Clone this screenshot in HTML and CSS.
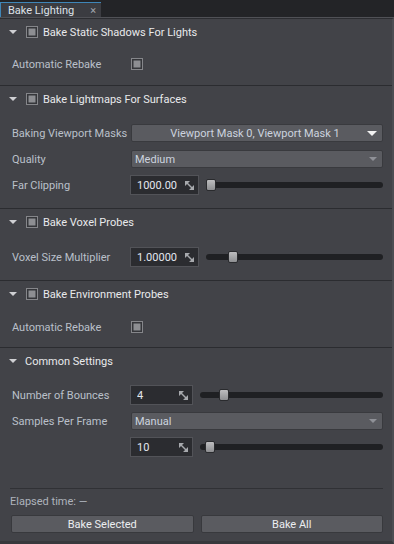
FILE: index.html
```html
<!doctype html>
<html lang="en">
<head>
	<meta charset="utf-8" />
	<title>Bake Lighting</title>
	<link rel="stylesheet" href="styles.css">
</head>
<body>

	<div class="window">

		<!-- BEGIN: Tab bar. -->
		<div class="tabbar">
			<div class="tab">
				<span class="tab__title">Bake Lighting</span>
				<span class="tab__close">&times;</span>
			</div>
		</div>
		<!-- END: Tab bar. -->

		<div class="panel">

			<!-- Static shadows. -->
			<section class="section">
				<div class="section__header">
					<span class="caret"></span>
					<span class="check"></span>
					<span class="section__title">Bake Static Shadows For Lights</span>
				</div>
				<div class="section__body section__body--a">
					<div class="row">
						<span class="row__label">Automatic Rebake</span>
						<span class="check check--field"></span>
					</div>
				</div>
			</section>

			<!-- Lightmaps. -->
			<section class="section">
				<div class="section__header">
					<span class="caret"></span>
					<span class="check"></span>
					<span class="section__title">Bake Lightmaps For Surfaces</span>
				</div>
				<div class="section__body section__body--b">
					<div class="row">
						<span class="row__label">Baking Viewport Masks</span>
						<div class="combo combo--center">
							<span class="combo__text">Viewport Mask 0, Viewport Mask 1</span>
							<span class="combo__arrow combo__arrow--bright"></span>
						</div>
					</div>
					<div class="row">
						<span class="row__label">Quality</span>
						<div class="combo">
							<span class="combo__text">Medium</span>
							<span class="combo__arrow"></span>
						</div>
					</div>
					<div class="row">
						<span class="row__label">Far Clipping</span>
						<div class="spin">
							<span class="spin__value">1000.000000</span>
							<svg class="spin__icon" viewBox="0 0 9 9"><path d="M0 0H5L0 5Z M9 9H4L9 4Z" fill="#a7a9ad"/><path d="M1.5 1.5L7.5 7.5" stroke="#a7a9ad" stroke-width="1.4"/></svg>
						</div>
						<div class="slider">
							<span class="slider__handle" style="left: 0px"></span>
						</div>
					</div>
				</div>
			</section>

			<!-- Voxel probes. -->
			<section class="section">
				<div class="section__header">
					<span class="caret"></span>
					<span class="check"></span>
					<span class="section__title">Bake Voxel Probes</span>
				</div>
				<div class="section__body section__body--c">
					<div class="row">
						<span class="row__label">Voxel Size Multiplier</span>
						<div class="spin">
							<span class="spin__value">1.00000</span>
							<svg class="spin__icon" viewBox="0 0 9 9"><path d="M0 0H5L0 5Z M9 9H4L9 4Z" fill="#a7a9ad"/><path d="M1.5 1.5L7.5 7.5" stroke="#a7a9ad" stroke-width="1.4"/></svg>
						</div>
						<div class="slider">
							<span class="slider__handle" style="left: 22px"></span>
						</div>
					</div>
				</div>
			</section>

			<!-- Environment probes. -->
			<section class="section">
				<div class="section__header">
					<span class="caret"></span>
					<span class="check"></span>
					<span class="section__title">Bake Environment Probes</span>
				</div>
				<div class="section__body section__body--d">
					<div class="row">
						<span class="row__label">Automatic Rebake</span>
						<span class="check check--field"></span>
					</div>
				</div>
			</section>

			<!-- Common settings. -->
			<section class="section section--last">
				<div class="section__header">
					<span class="caret caret--plain"></span>
					<span class="section__title">Common Settings</span>
				</div>
				<div class="section__body section__body--b">
					<div class="row">
						<span class="row__label">Number of Bounces</span>
						<div class="spin spin--short">
							<span class="spin__value">4</span>
							<svg class="spin__icon" viewBox="0 0 9 9"><path d="M0 0H5L0 5Z M9 9H4L9 4Z" fill="#a7a9ad"/><path d="M1.5 1.5L7.5 7.5" stroke="#a7a9ad" stroke-width="1.4"/></svg>
						</div>
						<div class="slider">
							<span class="slider__handle" style="left: 19px"></span>
						</div>
					</div>
					<div class="row">
						<span class="row__label">Samples Per Frame</span>
						<div class="combo">
							<span class="combo__text">Manual</span>
							<span class="combo__arrow"></span>
						</div>
					</div>
					<div class="row">
						<span class="row__label"></span>
						<div class="spin spin--short">
							<span class="spin__value">10</span>
							<svg class="spin__icon" viewBox="0 0 9 9"><path d="M0 0H5L0 5Z M9 9H4L9 4Z" fill="#a7a9ad"/><path d="M1.5 1.5L7.5 7.5" stroke="#a7a9ad" stroke-width="1.4"/></svg>
						</div>
						<div class="slider">
							<span class="slider__handle" style="left: 5px"></span>
						</div>
					</div>
				</div>
			</section>

			<!-- BEGIN: Footer. -->
			<div class="footer">
				<div class="footer__status">Elapsed time: &mdash;</div>
				<div class="footer__buttons">
					<button class="button">Bake Selected</button>
					<button class="button">Bake All</button>
				</div>
			</div>
			<!-- END: Footer. -->

		</div>
	</div>

</body>
</html>
```

FILE: styles.css
```css
html {
	box-sizing: border-box ;
}

*, *:before, *:after {
	box-sizing: inherit ;
}

body {
	background-color: #232427 ;
	color: #bac0ca ;
	font-family: Roboto, "Liberation Sans", sans-serif ;
	font-size: 11px ;
	margin: 0px 0px 0px 0px ;
}

.window {
	display: flex ;
	flex-direction: column ;
	height: 544px ;
	width: 394px ;
}

/* BEGIN: Tab bar. */
.tabbar {
	align-items: flex-end ;
	background-color: #232427 ;
	border-bottom: 1px solid #505156 ;
	display: flex ;
	flex: 0 0 auto ;
	height: 18px ;
}

.tab {
	align-items: center ;
	background-color: #3b3c41 ;
	border-left: 1px solid #3f86b8 ;
	border-top: 1px solid #3f86b8 ;
	display: flex ;
	height: 15px ;
	padding: 0px 0px 0px 7px ;
	width: 101px ;
}

.tab__title {
	color: #dde1e8 ;
	flex: 1 1 auto ;
}

.tab__close {
	color: #a2a6ad ;
	font-size: 11px ;
	margin: 0px 5px 0px 0px ;
}
/* END: Tab bar. */

.panel {
	background-color: #424348 ;
	border-bottom: 3px solid #37383c ;
	border-right: 2px solid #4c4d52 ;
	border-top: 1px solid #2c2d31 ;
	display: flex ;
	flex: 1 1 auto ;
	flex-direction: column ;
}

/* BEGIN: Sections. */
.section {
	border-bottom: 1px solid #2b2c30 ;
	flex: 0 0 auto ;
}

.section--last {
	border-bottom: none ;
	flex: 1 1 auto ;
}

.section__header {
	align-items: center ;
	color: #e9eaec ;
	display: flex ;
	height: 26px ;
	padding: 0px 0px 0px 9px ;
}

.section__body {
	display: flex ;
	flex-direction: column ;
	gap: 6px ;
	padding: 11px 9px 13px 12px ;
}

.section__body--a {
	padding: 9px 9px 11px 12px ;
}

.section__body--c {
	padding: 12px 9px 13px 12px ;
}

.section__body--d {
	padding: 10px 9px 10px 12px ;
}

.caret {
	border-left: 4px solid transparent ;
	border-right: 4px solid transparent ;
	border-top: 4px solid #cfd0d3 ;
	height: 0px ;
	margin: 0px 9px 0px 0px ;
	width: 0px ;
}

.caret--plain {
	margin: 0px 8px 0px 0px ;
}

.check {
	background-color: #8d8e92 ;
	border: 1px solid #85868a ;
	box-shadow: inset 0px 0px 0px 1.5px #35363a ;
	height: 12px ;
	margin: 0px 5px 0px 0px ;
	width: 12px ;
}

.check--field {
	margin: 0px 0px 0px 1px ;
}
/* END: Sections. */

/* BEGIN: Rows and fields. */
.row {
	align-items: center ;
	display: flex ;
	height: 20px ;
}

.row__label {
	flex: 0 0 auto ;
	white-space: nowrap ;
	width: 118px ;
}

.combo {
	align-items: center ;
	background-color: #5a5b60 ;
	border: 1px solid #393a3e ;
	border-radius: 2px ;
	color: #ccd3df ;
	display: flex ;
	flex: 1 1 auto ;
	height: 18px ;
	margin: 0px 0px 0px 1px ;
	padding: 0px 5px 0px 3px ;
}

.combo__text {
	flex: 1 1 auto ;
}

.combo--center .combo__text {
	padding: 0px 0px 0px 8px ;
	text-align: center ;
}

.combo__arrow {
	border-left: 4px solid transparent ;
	border-right: 4px solid transparent ;
	border-top: 4px solid #8f9197 ;
	height: 0px ;
	width: 0px ;
}

.combo__arrow--bright {
	border-left-width: 5px ;
	border-right-width: 5px ;
	border-top: 5px solid #f2f2f2 ;
}

.spin {
	align-items: center ;
	background-color: #2b2c30 ;
	border: 1px solid #525358 ;
	color: #e3e7ee ;
	display: flex ;
	flex: 0 0 auto ;
	height: 20px ;
	padding: 0px 4px 0px 6px ;
	width: 69px ;
}

.spin--short {
	width: 63px ;
}

.spin__value {
	flex: 1 1 auto ;
	overflow: hidden ;
	white-space: nowrap ;
}

.spin__icon {
	flex: 0 0 auto ;
	height: 9px ;
	margin: 0px 0px 0px 8px ;
	width: 9px ;
}

.slider {
	background-color: #1f2023 ;
	border-radius: 3px ;
	flex: 1 1 auto ;
	height: 6px ;
	margin: 0px 0px 0px 7px ;
	position: relative ;
}

.slider__handle {
	background: linear-gradient( #bdbdbf, #8e8f92 ) ;
	border: 1px solid #2a2b2e ;
	border-radius: 2px ;
	height: 12px ;
	position: absolute ;
	top: -3px ;
	width: 10px ;
}
/* END: Rows and fields. */

/* BEGIN: Footer. */
.footer {
	border-top: 1px solid #303135 ;
	flex: 0 0 auto ;
	margin: 0px 9px 0px 10px ;
	padding: 5px 0px 8px 0px ;
}

.footer__status {
	color: #aeb3bc ;
	height: 16px ;
	line-height: 16px ;
}

.footer__buttons {
	display: flex ;
	gap: 7px ;
	margin: 5px 0px 0px 0px ;
	padding: 0px 0px 0px 1px ;
}

.button {
	background-color: #5a5b60 ;
	border: 1px solid #38393d ;
	border-radius: 2px ;
	color: #eceef1 ;
	flex: 1 1 0px ;
	font-family: Roboto, "Liberation Sans", sans-serif ;
	font-size: 11px ;
	height: 18px ;
	padding: 0px 0px 0px 0px ;
}
/* END: Footer. */
```
